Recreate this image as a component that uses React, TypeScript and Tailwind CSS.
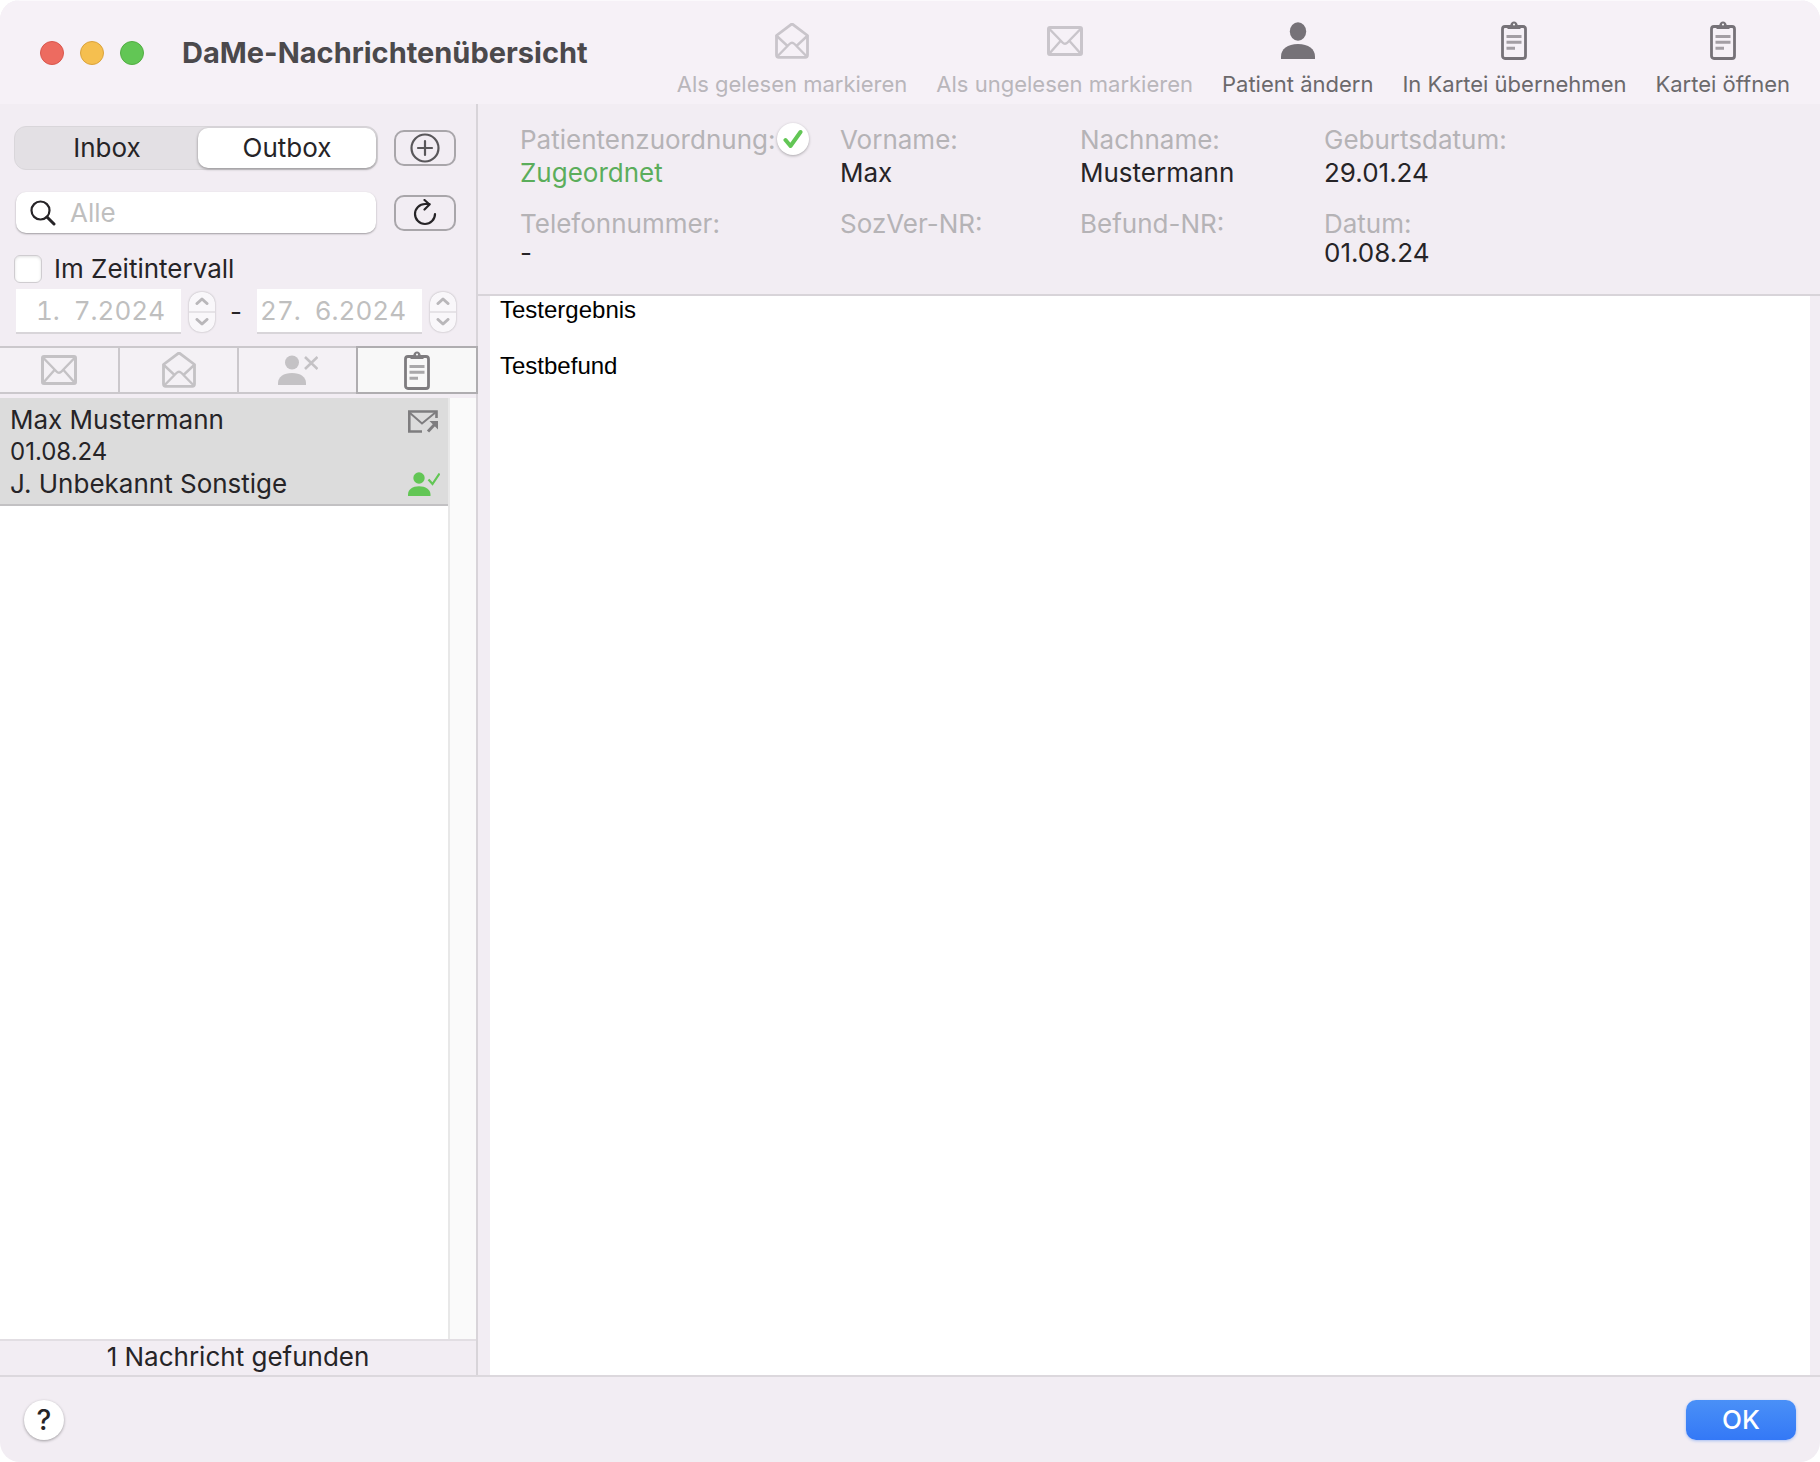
import { useState, type ReactNode } from "react";

function MailClosed() {
  return (
    <svg width="36" height="30" viewBox="0 0 36 30" fill="none" stroke="currentColor" strokeWidth="3" strokeLinejoin="round" strokeLinecap="round" aria-hidden="true">
      <rect x="1.5" y="1.5" width="33" height="27" rx="1.500" />
      <path d="M2 2.5 15.5 16.500c1.5 1.6 3.5 1.6 5 0L34 2.5M2 28l11.500-13M34 28 22.500 15" strokeWidth="2.400" />
    </svg>
  );
}

function MailOpen() {
  return (
    <svg width="34" height="36" viewBox="0 0 34 36" fill="none" stroke="currentColor" strokeWidth="2.800" strokeLinejoin="round" strokeLinecap="round" aria-hidden="true">
      <path d="M1.500 12.500 15.600 1.800c.9-.7 1.900-.7 2.800 0L32.500 12.500V32c0 1.500-.8 2.300-2.300 2.300H3.800c-1.500 0-2.300-.8-2.300-2.300Z" />
      <path d="M1.800 13 12 22.500M32.200 13 22 22.500M2.200 33.500 14.500 21c1.600-1.600 3.400-1.600 5 0l12.300 12.500" strokeWidth="2.400" />
    </svg>
  );
}

function Clipboard() {
  return (
    <svg width="26" height="39" viewBox="0 0 26 39" fill="none" aria-hidden="true">
      <rect x="1.500" y="5.500" width="23" height="32" rx="2.500" stroke="currentColor" strokeWidth="2.800" />
      <path d="M6.500 8V5.500c0-1 .8-1.500 2-1.500h.8C9.800 1.700 11 .5 13 .5s3.200 1.200 3.700 3.500h.8c1.200 0 2 .5 2 1.500V8Z" fill="currentColor" />
      <circle cx="13" cy="3.600" r="1" fill="#fff" />
      <g stroke="currentColor" strokeOpacity="0.650" strokeWidth="3">
        <path d="M5.500 15.500h15M5.500 21.300h15M5.500 27.200h8.500" />
      </g>
    </svg>
  );
}

function Person() {
  return (
    <svg width="34" height="37" viewBox="0 0 34 37" fill="currentColor" aria-hidden="true">
      <ellipse cx="17" cy="9.500" rx="8.200" ry="9.200" />
      <path d="M0 37v-2.500C0 27 6.500 22 17 22s17 5 17 12.500V37Z" />
    </svg>
  );
}

function PersonCross() {
  return (
    <svg width="40" height="30" viewBox="0 0 40 30" fill="currentColor" aria-hidden="true">
      <circle cx="14" cy="7.500" r="7" />
      <path d="M0 30v-2c0-6 5.500-10 14-10s14 4 14 10v2Z" />
      <path d="m27 2 12.500 12M39.500 2 27 14" stroke="currentColor" strokeWidth="2.600" fill="none" />
    </svg>
  );
}

function PersonCheck() {
  return (
    <svg width="32" height="24" viewBox="0 0 32 24" fill="currentColor" aria-hidden="true">
      <circle cx="11" cy="6" r="5.700" />
      <path d="M0 24v-1.500C0 17.500 4.500 14.300 11 14.300s11.500 3.200 11.500 8.200V24Z" />
      <path d="m20.500 7.500 4 4.500L31.500 1.500" stroke="currentColor" strokeWidth="2.200" fill="none" />
    </svg>
  );
}

function MailOutgoing() {
  return (
    <svg width="30" height="23" viewBox="0 0 30 23" fill="none" stroke="currentColor" strokeWidth="2" aria-hidden="true">
      <path d="M28.500 8V1.500H1.300v20H14" strokeWidth="2.600" />
      <path d="m2 3 12 10.500L28 2" />
      <path d="m20 21.500 8-8.500" strokeWidth="3" />
      <path d="M21.500 11H30v8.500Z" fill="currentColor" stroke="none" />
    </svg>
  );
}

function ToolbarItem({ icon, label, disabled }: { icon: ReactNode; label: string; disabled?: boolean }) {
  return (
    <button
      type="button"
      disabled={disabled}
      className="flex flex-col items-center gap-2 whitespace-nowrap text-[#767278] disabled:text-[#c9c5cb]"
    >
      <span className="flex h-[42px] items-center">{icon}</span>
      <span className={disabled ? "text-[22px] leading-7 text-[#b9b6bb]" : "text-[22px] leading-7 text-[#6b696c]"}>{label}</span>
    </button>
  );
}

function Stepper({ label }: { label: string }) {
  return (
    <div className="flex h-10 w-[26px] flex-col rounded-xl bg-[#f9f7fa] text-[#b9b7ba] shadow-[0_0_2px_rgba(0,0,0,0.3)]">
      <button type="button" disabled aria-label={`${label} erhöhen`} className="flex flex-1 items-center justify-center border-b-2 border-[#e6e3e7]">
        <svg width="14" height="8" viewBox="0 0 14 8" fill="none" stroke="currentColor" strokeWidth="3" strokeLinecap="round" strokeLinejoin="round">
          <path d="m2 6.500 5-4.500 5 4.500" />
        </svg>
      </button>
      <button type="button" disabled aria-label={`${label} verringern`} className="flex flex-1 items-center justify-center">
        <svg width="14" height="8" viewBox="0 0 14 8" fill="none" stroke="currentColor" strokeWidth="3" strokeLinecap="round" strokeLinejoin="round">
          <path d="m2 1.500 5 4.500 5-4.500" />
        </svg>
      </button>
    </div>
  );
}

function DateField({ label, value }: { label: string; value: string }) {
  return (
    <input
      type="text"
      aria-label={label}
      defaultValue={value}
      disabled
      className="h-[45px] w-full min-w-0 flex-1 border-b-2 border-[#d8d5d9] bg-white pr-4 text-right tabular-nums text-[#bfbfbf]"
    />
  );
}

function Field({ label, value, badge, green, tight }: { label: string; value: string; badge?: ReactNode; green?: boolean; tight?: boolean }) {
  return (
    <div className={green ? "whitespace-nowrap text-[#5bad5b]" : "whitespace-nowrap text-[#262427]"}>
      <dt className="flex h-[34px] items-center gap-0.5 text-[#b5b3b6]">
        {label}
        {badge}
      </dt>
      <dd className={tight ? "h-[26px] leading-[26px]" : "h-[34px] leading-[34px]"}>{value}</dd>
    </div>
  );
}

const filters = [
  { label: "Ungelesen", icon: <MailClosed /> },
  { label: "Gelesen", icon: <MailOpen /> },
  { label: "Nicht zugeordnet", icon: <PersonCross /> },
  { label: "In Kartei", icon: <Clipboard /> },
];

export default function App() {
  const [box, setBox] = useState("Outbox");
  const [filter, setFilter] = useState(3);

  return (
    <div className="min-h-screen bg-white font-['Inter',sans-serif] text-[26px] text-[#262427]">
      <div className="flex min-h-screen flex-col overflow-hidden rounded-[20px] bg-[#f2edf3]">
        <header className="flex h-[104px] shrink-0 items-center justify-between border-t border-[#fbf9fc] bg-[#f6f1f7] pr-[30px] pl-10">
          <div className="flex items-center">
            <div className="flex gap-4">
              <button type="button" aria-label="Schließen" className="size-6 rounded-full border border-[#d9574d] bg-[#ed6b60]" />
              <button type="button" aria-label="Minimieren" className="size-6 rounded-full border border-[#dba33c] bg-[#f5bf4f]" />
              <button type="button" aria-label="Vergrößern" className="size-6 rounded-full border border-[#52ae43] bg-[#62c655]" />
            </div>
            <h1 className="ml-[38px] text-[29px] font-bold whitespace-nowrap text-[#4b494c]">DaMe-Nachrichtenübersicht</h1>
          </div>
          <nav aria-label="Werkzeuge" className="flex gap-[29px] pt-3">
            <ToolbarItem disabled icon={<MailOpen />} label="Als gelesen markieren" />
            <ToolbarItem disabled icon={<MailClosed />} label="Als ungelesen markieren" />
            <ToolbarItem icon={<Person />} label="Patient ändern" />
            <ToolbarItem icon={<Clipboard />} label="In Kartei übernehmen" />
            <ToolbarItem icon={<Clipboard />} label="Kartei öffnen" />
          </nav>
        </header>

        <div className="flex flex-1">
          <aside className="flex w-[478px] shrink-0 flex-col border-r-2 border-[#d8d4d9]">
            <div className="flex flex-col pt-[22px] pr-5 pl-[14px]">
              <div className="flex items-center justify-between">
                <div className="flex h-11 w-[364px] rounded-xl border border-[#d9d6da] bg-[#e3e0e4] p-px">
                  {["Inbox", "Outbox"].map((name) => (
                    <button
                      key={name}
                      type="button"
                      aria-pressed={box === name}
                      onClick={() => setBox(name)}
                      className={
                        box === name
                          ? "w-[178px] rounded-[10px] bg-white leading-9 shadow-[0_1px_3px_rgba(0,0,0,0.4)]"
                          : "flex-1 rounded-[10px] leading-9"
                      }
                    >
                      {name}
                    </button>
                  ))}
                </div>
                <button type="button" aria-label="Neu" className="flex h-9 w-[62px] items-center justify-center rounded-[10px] border-2 border-[#a9a6aa] text-[#59575a]">
                  <svg width="30" height="30" viewBox="0 0 30 30" fill="none" stroke="currentColor" strokeWidth="2.200">
                    <circle cx="15" cy="15" r="13.500" />
                    <path d="M15 8v14M8 15h14" strokeLinecap="round" />
                  </svg>
                </button>
              </div>

              <div className="mt-[22px] flex items-center justify-between pl-0.5">
                <label className="flex h-[41px] w-[360px] items-center gap-[14px] rounded-[10px] bg-white pl-[14px] shadow-[0_1px_2px_rgba(0,0,0,0.35)]">
                  <svg width="26" height="26" viewBox="0 0 26 26" fill="none" stroke="#262427" strokeWidth="2.200" strokeLinecap="round" aria-hidden="true">
                    <circle cx="10.500" cy="10.500" r="9" />
                    <path d="m17 17 7 7" strokeWidth="3" />
                  </svg>
                  <input type="search" placeholder="Alle" aria-label="Suche" className="min-w-0 flex-1 bg-transparent outline-none placeholder:text-[#bfbfbf]" />
                </label>
                <button type="button" aria-label="Aktualisieren" className="flex h-9 w-[62px] items-center justify-center rounded-[10px] border-2 border-[#a9a6aa]">
                  <svg width="24" height="28" viewBox="0 0 24 28" fill="none" stroke="#262427" strokeWidth="2.200" strokeLinecap="round" strokeLinejoin="round">
                    <path d="M22 15a10 10 0 1 1-10-10h4.500" />
                    <path d="m11.500 1 5 4.500-5 5" />
                  </svg>
                </button>
              </div>

              <label className="mt-[18px] flex items-center gap-3 leading-9">
                <input type="checkbox" className="size-7 appearance-none rounded-md border border-[#cfccd0] bg-white shadow-[inset_0_1px_3px_rgba(0,0,0,0.12)] checked:bg-[#3478f6]" />
                Im Zeitintervall
              </label>

              <div className="mt-0.5 flex items-center gap-2 pl-0.5">
                <DateField label="Von" value="1.  7.2024" />
                <Stepper label="Von" />
                <span className="w-[26px] text-center">-</span>
                <DateField label="Bis" value="27.  6.2024" />
                <Stepper label="Bis" />
              </div>
            </div>

            <div className="mt-3 -mr-0.5 grid h-12 grid-cols-[120px_119px_117px_1fr]">
              {filters.map((f, i) => (
                <button
                  key={f.label}
                  type="button"
                  aria-label={f.label}
                  aria-pressed={filter === i}
                  onClick={() => setFilter(i)}
                  className={
                    filter === i
                      ? "flex items-center justify-center border-2 border-[#afadb0] bg-[#f8f8f8] text-[#7e7c7f]"
                      : "flex items-center justify-center border-y-2 border-r-2 border-[#cbc8cc] bg-[#f4f1f5] text-[#c4c2c5] nth-3:border-r-0"
                  }
                >
                  {f.icon}
                </button>
              ))}
            </div>

            <div className="mt-1 flex flex-1">
              <ul className="flex-1 bg-white">
                <li className="flex h-[108px] justify-between border-b-2 border-[#c2c1c3] bg-[#dcdcdc] pt-1.5 pr-2 pl-[10px]">
                  <div className="leading-8">
                    <p>Max Mustermann</p>
                    <p className="text-2xl leading-8">01.08.24</p>
                    <p>J. Unbekannt Sonstige</p>
                  </div>
                  <div className="flex flex-col justify-between pt-1.5 pb-2">
                    <span className="text-[#7e7d7f]">
                      <MailOutgoing />
                    </span>
                    <span className="text-[#62c655]">
                      <PersonCheck />
                    </span>
                  </div>
                </li>
              </ul>
              <div className="w-7 border-l-2 border-[#e8e8e8] bg-[#fafafa]" />
            </div>
            <p className="h-9 border-t-2 border-[#e2dee3] text-center leading-8">1 Nachricht gefunden</p>
          </aside>

          <main className="flex min-w-0 flex-1 flex-col">
            <dl className="grid h-[192px] grid-cols-[320px_240px_244px_1fr] content-start gap-y-4 border-b-2 border-[#d8d4d9] pt-[18px] pl-[42px]">
              <Field
                label="Patientenzuordnung:"
                value="Zugeordnet"
                green
                badge={
                  <span className="flex size-8 items-center justify-center rounded-full bg-white shadow-[0_1px_3px_rgba(0,0,0,0.3)]">
                    <svg width="20" height="20" viewBox="0 0 20 20" fill="none" stroke="#62c655" strokeWidth="4" strokeLinecap="round" strokeLinejoin="round" aria-hidden="true">
                      <path d="m2.500 11 5 6L17.500 3" />
                    </svg>
                  </span>
                }
              />
              <Field label="Vorname:" value="Max" />
              <Field label="Nachname:" value="Mustermann" />
              <Field label="Geburtsdatum:" value="29.01.24" />
              <Field tight label="Telefonnummer:" value="-" />
              <Field tight label="SozVer-NR:" value="" />
              <Field tight label="Befund-NR:" value="" />
              <Field tight label="Datum:" value="01.08.24" />
            </dl>
            <article className="mr-[10px] ml-3 flex flex-1 flex-col gap-7 bg-white pl-[10px] font-['Liberation_Sans',sans-serif] text-2xl leading-7 text-black">
              <p>Testergebnis</p>
              <p>Testbefund</p>
            </article>
          </main>
        </div>

        <footer className="flex h-[87px] shrink-0 items-center justify-between border-t-2 border-[#dcd8dd] px-6">
          <button type="button" aria-label="Hilfe" className="size-10 rounded-full bg-white text-[28px] leading-10 font-medium shadow-[0_1px_3px_rgba(0,0,0,0.35)]">
            ?
          </button>
          <button type="button" className="h-10 w-[110px] rounded-[10px] bg-linear-to-b from-[#4a90f7] to-[#3478f6] leading-9 font-medium text-white shadow-[0_1px_3px_rgba(52,120,246,0.4)]">
            OK
          </button>
        </footer>
      </div>
    </div>
  );
}
